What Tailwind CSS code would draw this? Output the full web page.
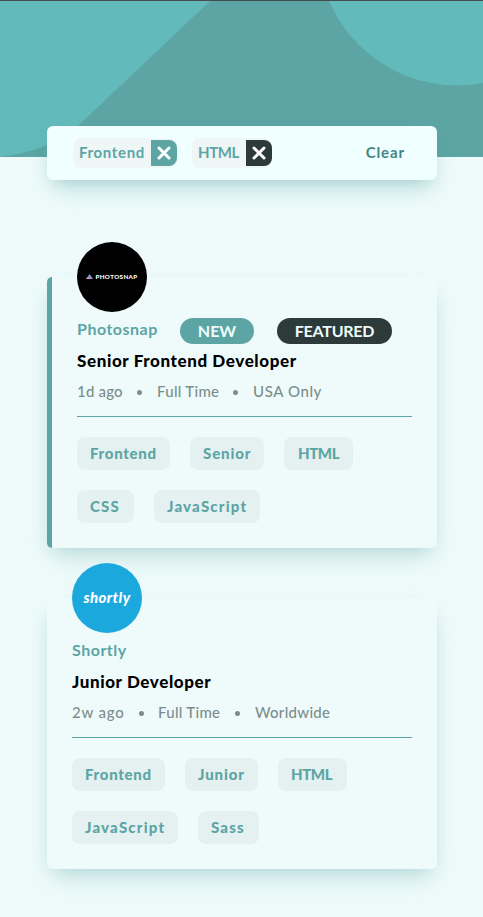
<!DOCTYPE html>
<html lang="en">
<head>
<meta charset="utf-8">
<title>Job listings</title>
<script src="https://cdn.jsdelivr.net/npm/@tailwindcss/browser@4"></script>
</head>
<body class="h-[917px] overflow-hidden bg-[#effbfb] font-['Lato',sans-serif] whitespace-nowrap">
<header class="h-[157px] border-t border-[#484b4d] bg-[#5ca5a4]">
  <svg class="block" width="483" height="156" viewBox="0 1 483 156" fill="#63babb"><path d="M0 0H211L78 126Q47 152 0 156.500Z"/><circle cx="457" cy="-53.500" r="139"/></svg>
</header>
<main class="px-[47px] pr-[46px]">
  <section class="relative -mt-[31px] flex h-[54px] items-center rounded-md bg-[#f0ffff] pl-[26px] pr-[32px] text-[15px] font-bold text-[#5ca5a4] shadow-[0_13px_27px_-5px_rgba(92,165,164,0.3),0_8px_16px_-8px_rgba(92,165,164,0.4)]">
    <div class="flex h-[30px] w-[104px] items-center rounded-lg bg-[#eef6f6]"><span class="w-[78px] pb-[2px] pl-[6px] tracking-[0.65px]">Frontend</span><button class="flex size-[26px] items-center justify-center rounded-r-lg bg-[#5ca5a4]"><svg width="14" height="14" viewBox="0 0 14 14"><path d="M2 2L12 12M12 2L2 12" stroke="white" stroke-width="3" stroke-linecap="round"/></svg></button></div>
    <div class="ml-[15px] flex h-[30px] w-[80px] items-center rounded-lg bg-[#eef6f6]"><span class="w-[54px] pb-[2px] pl-[6px] tracking-[-0.4px]">HTML</span><button class="flex size-[26px] items-center justify-center rounded-r-lg bg-[#2c3a3a]"><svg width="14" height="14" viewBox="0 0 14 14"><path d="M2 2L12 12M12 2L2 12" stroke="white" stroke-width="3" stroke-linecap="round"/></svg></button></div>
    <button class="ml-auto pb-[2px] tracking-[0.9px] text-[#458586]">Clear</button>
  </section>

  <article class="mt-[97px] h-[271px] rounded-[5px] border-l-5 border-[#5ca5a4] bg-[#effbfb] px-[25px] shadow-[0_13px_27px_-5px_rgba(92,165,164,0.25),0_8px_16px_-8px_rgba(92,165,164,0.3)]">
    <div class="relative -top-[35px] flex size-[70px] items-center justify-center gap-[2px] rounded-full bg-black text-white">
      <svg width="7" height="6" viewBox="0 0 7 6"><path d="M3.500 0L7 5H0Z" fill="#8296d8"/><path d="M2 3L4.500 5H0Z" fill="#e88b83"/></svg><span class="text-[6.2px] leading-none font-black tracking-[0.4px]">PHOTOSNAP</span>
    </div>
    <div class="-mt-[29px] flex h-[26px] items-center">
      <h3 class="-mt-[4px] w-[103px] text-[16px] leading-[22px] font-bold tracking-[0.5px] text-[#5ca5a4]">Photosnap</h3>
      <span class="flex h-[26px] w-[74px] items-center justify-center rounded-full bg-[#5ca5a4] text-[16px] font-bold text-[#effbfb]">NEW</span>
      <span class="ml-[23px] flex h-[26px] w-[115px] items-center justify-center rounded-full bg-[#2c3a3a] text-[16px] font-bold tracking-[-0.25px] text-[#effbfb]">FEATURED</span>
    </div>
    <h2 class="mt-[5px] text-[17px] leading-[24px] font-black tracking-[0.6px] text-black">Senior Frontend Developer</h2>
    <div class="mt-[8px] flex h-[22px] items-center text-[15px] font-medium text-[#7b8e8e]"><span class="w-[60px] pb-px tracking-[0.2px]">1d ago</span><i class="size-[5px] rounded-full bg-[#7b8e8e]"></i><span class="ml-[15px] w-[76px] pb-px tracking-[0.3px]">Full Time</span><i class="size-[5px] rounded-full bg-[#7b8e8e]"></i><span class="ml-[15px] pb-px tracking-[0.6px]">USA Only</span></div>
    <hr class="mt-[13px] border-[#5ca5a4]">
    <div class="mt-[20px] flex flex-wrap gap-5 text-[15px] leading-[32px] font-black text-[#5ca5a4]">
      <span class="h-[33px] w-[93px] rounded-lg bg-[#e5f1f1] pl-[13px] tracking-[0.7px]">Frontend</span><span class="h-[33px] w-[74px] rounded-lg bg-[#e5f1f1] pl-[13px] tracking-[0.9px]">Senior</span><span class="h-[33px] w-[69px] rounded-lg bg-[#e5f1f1] pl-[14px] tracking-[-0.4px]">HTML</span><span class="h-[33px] w-[57px] rounded-lg bg-[#e5f1f1] pl-[13px] tracking-[1.2px]">CSS</span><span class="h-[33px] w-[106px] rounded-lg bg-[#e5f1f1] pl-[13px] tracking-[1.2px]">JavaScript</span>
    </div>
  </article>

  <article class="mt-[50px] h-[271px] rounded-[5px] bg-[#effbfb] px-[25px] shadow-[0_13px_27px_-5px_rgba(92,165,164,0.25),0_8px_16px_-8px_rgba(92,165,164,0.3)]">
    <div class="relative -top-[35px] flex size-[70px] items-center justify-center rounded-full bg-[#1ba8dc] pb-[1px] text-[15px] font-black tracking-[0.4px] italic text-white">shortly</div>
    <div class="-mt-[29px] flex h-[26px] items-center"><h3 class="-mt-[4px] text-[16px] leading-[22px] font-bold tracking-[0.5px] text-[#5ca5a4]">Shortly</h3></div>
    <h2 class="mt-[5px] text-[17px] leading-[24px] font-black tracking-[0.6px] text-black">Junior Developer</h2>
    <div class="mt-[8px] flex h-[22px] items-center text-[15px] font-medium text-[#7b8e8e]"><span class="w-[67px] pb-px tracking-[0.8px]">2w ago</span><i class="size-[5px] rounded-full bg-[#7b8e8e]"></i><span class="ml-[14px] w-[77px] pb-px tracking-[0.3px]">Full Time</span><i class="size-[5px] rounded-full bg-[#7b8e8e]"></i><span class="ml-[15px] pb-px tracking-[0.3px]">Worldwide</span></div>
    <hr class="mt-[13px] border-[#5ca5a4]">
    <div class="mt-[20px] flex flex-wrap gap-5 text-[15px] leading-[32px] font-black text-[#5ca5a4]">
      <span class="h-[33px] w-[93px] rounded-lg bg-[#e5f1f1] pl-[13px] tracking-[0.7px]">Frontend</span><span class="h-[33px] w-[73px] rounded-lg bg-[#e5f1f1] pl-[13px] tracking-[0.9px]">Junior</span><span class="h-[33px] w-[69px] rounded-lg bg-[#e5f1f1] pl-[13px] tracking-[-0.4px]">HTML</span><span class="h-[33px] w-[106px] rounded-lg bg-[#e5f1f1] pl-[13px] tracking-[1.2px]">JavaScript</span><span class="h-[33px] w-[61px] rounded-lg bg-[#e5f1f1] pl-[13px] tracking-[1.2px]">Sass</span>
    </div>
  </article>
</main>
</body>
</html>
